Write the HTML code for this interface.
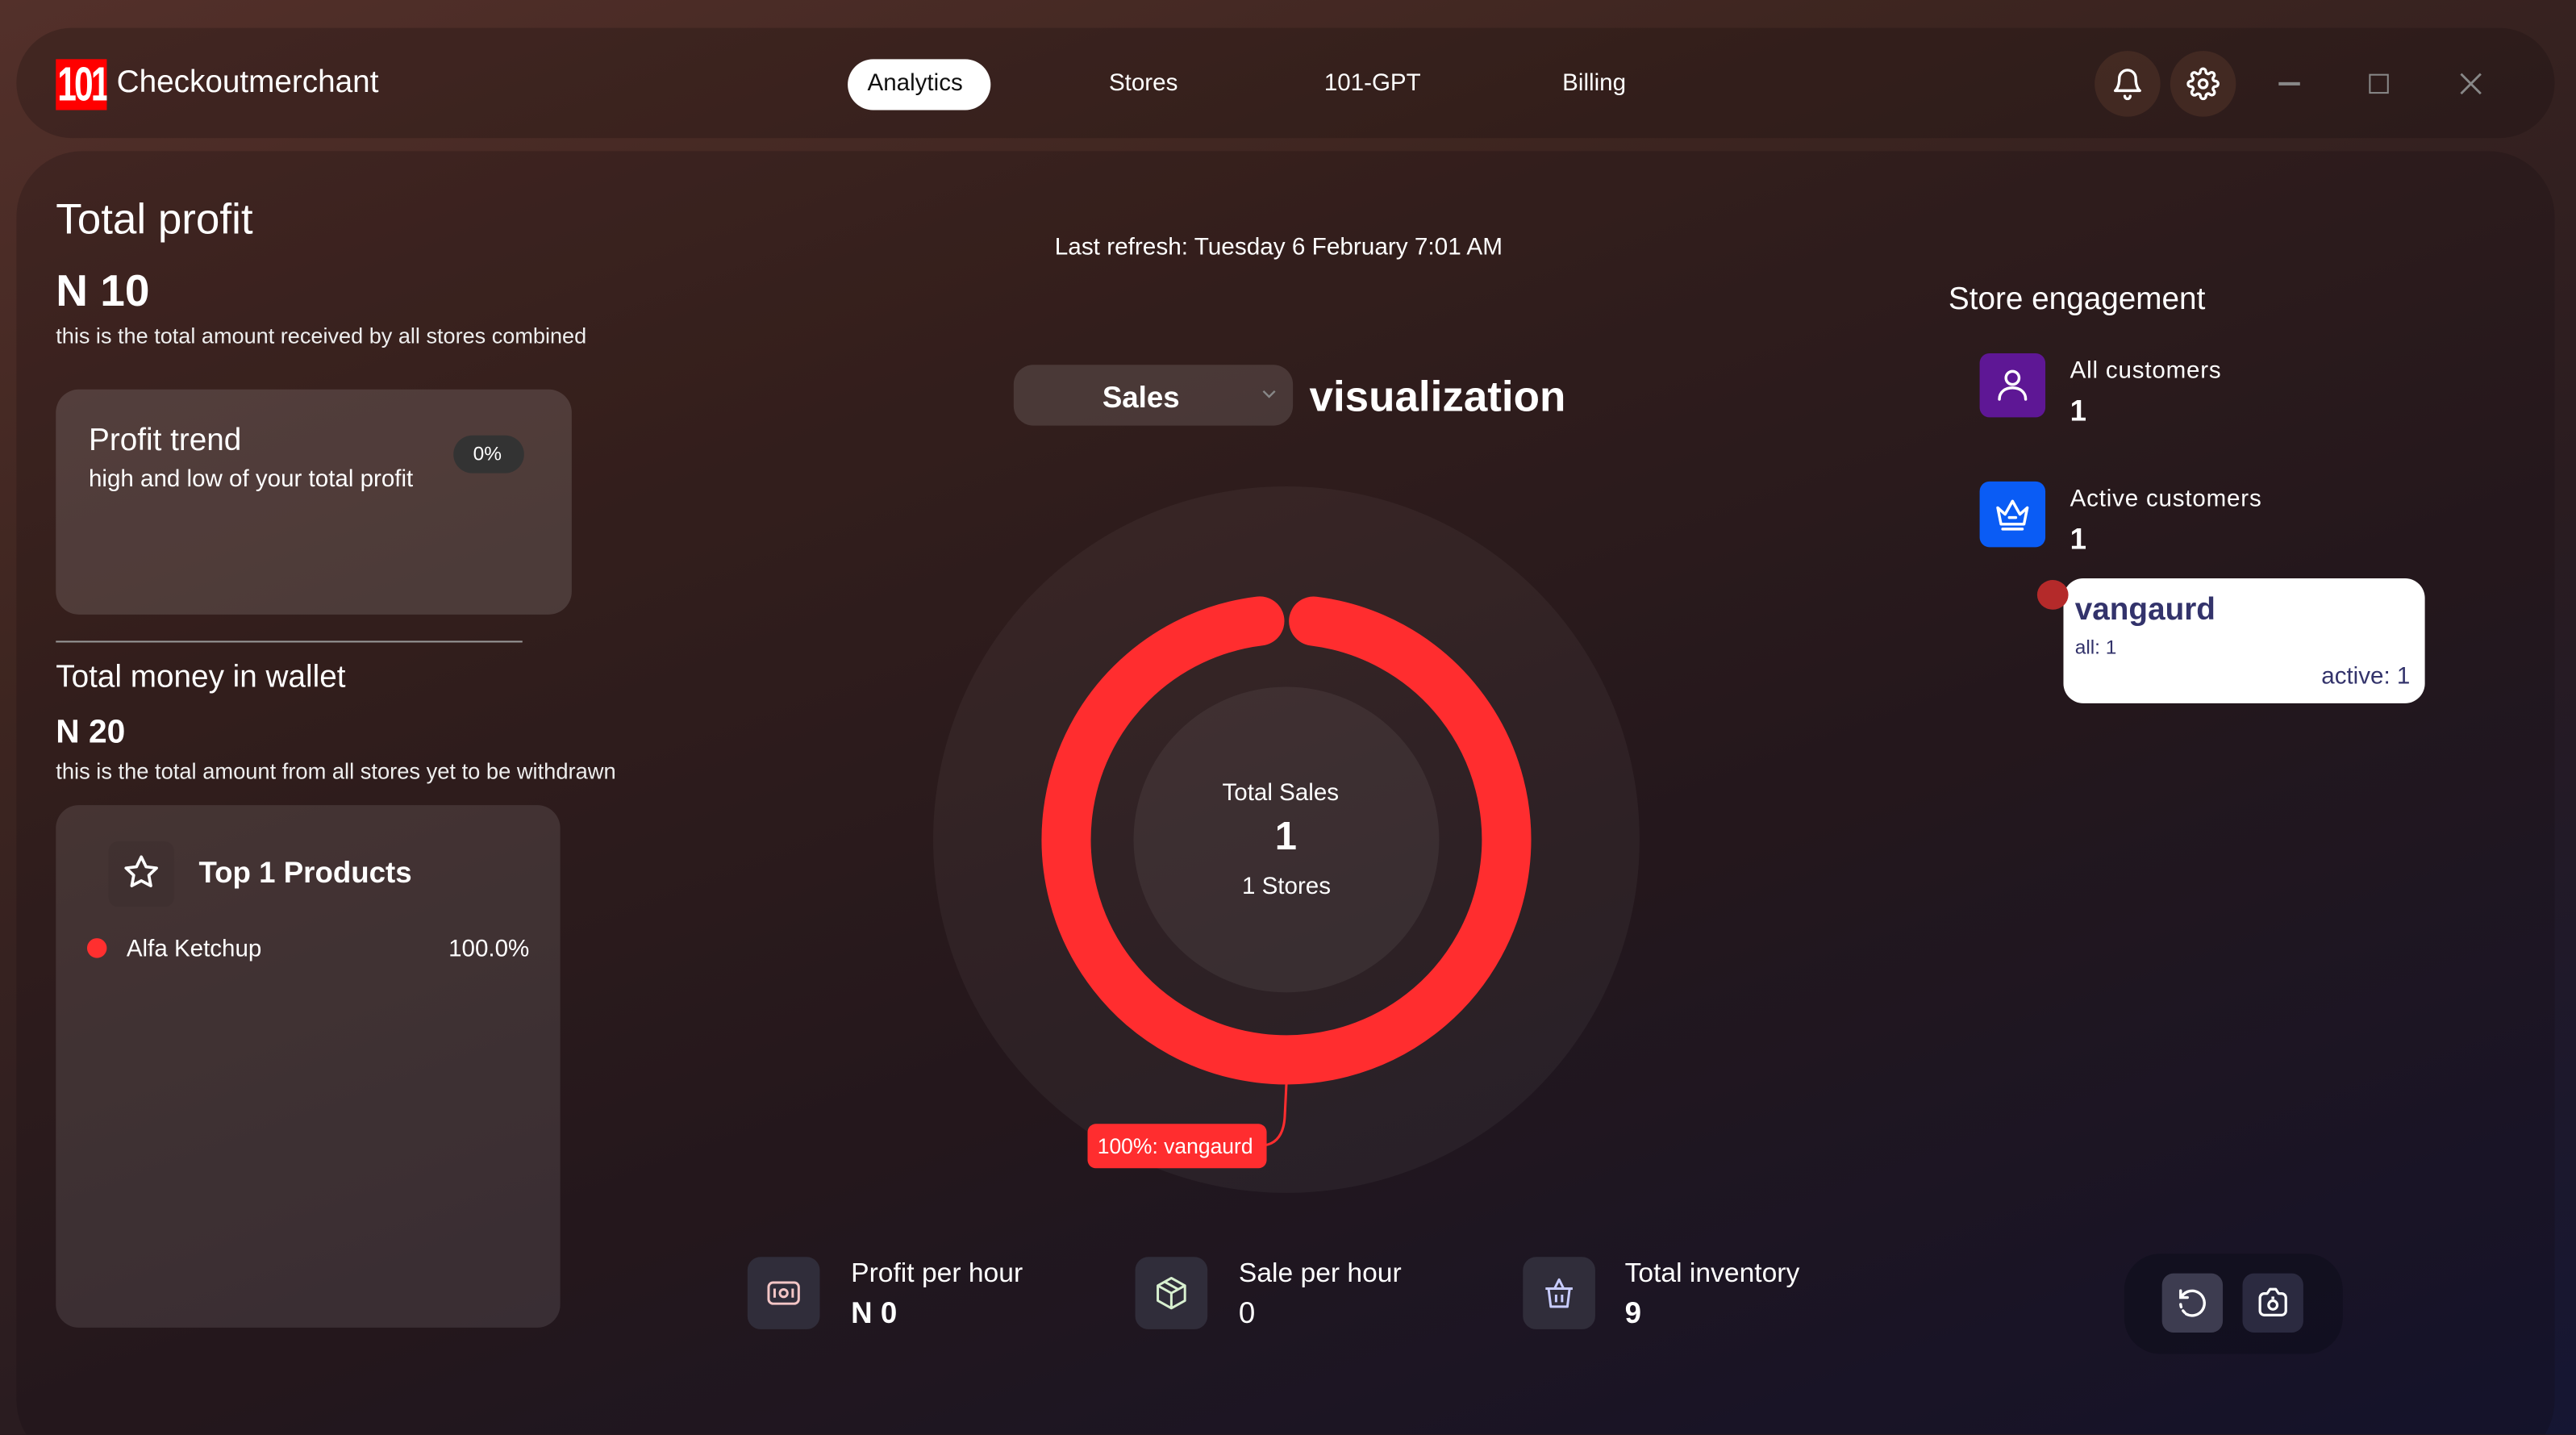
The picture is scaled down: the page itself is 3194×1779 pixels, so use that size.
<!DOCTYPE html>
<html><head><meta charset="utf-8"><style>
*{margin:0;padding:0;box-sizing:border-box}
html,body{width:3194px;height:1779px;overflow:hidden;background:#2a1a1e}
#s{position:absolute;left:0;top:0;width:1568px;height:873.4px;transform:scale(2.037);transform-origin:0 0;
background:linear-gradient(160deg,#53302a 0%,#3d2520 30%,#2a1c20 60%,#151633 100%);font-family:"Liberation Sans",sans-serif;color:#fff;overflow:hidden}
.a{position:absolute}
.hdr{left:10px;top:17px;width:1545px;height:67px;border-radius:34px;background:rgba(20,10,10,.25)}
.main{left:10px;top:92px;width:1545px;height:800px;border-radius:40px;background:rgba(20,10,12,.22)}
.t{position:absolute;white-space:nowrap}
.card{background:rgba(255,255,255,.12);border-radius:14px}
.ib{width:44px;height:44px;border-radius:8px;background:#302d3a}
</style></head><body><div id="s">
<div class="a hdr"></div>
<div class="a main"></div>
<!-- logo -->
<div class="a" style="left:34px;top:36px;width:31px;height:31px;background:#f00;overflow:hidden">
<div class="t" style="left:1px;top:1px;font:bold 29px/31px 'Liberation Sans',sans-serif;letter-spacing:-2px;color:#fff;transform:scaleX(.72);transform-origin:0 0">101</div></div>
<div class="t" style="left:71px;top:40px;font-size:19px">Checkoutmerchant</div>
<!-- nav -->
<div class="a" style="left:516px;top:36px;width:87px;height:31px;border-radius:16px;background:#fff"></div>
<div class="t" style="left:528px;top:43px;font-size:14.5px;color:#111">Analytics</div>
<div class="t" style="left:675px;top:43px;font-size:14.5px">Stores</div>
<div class="t" style="left:806px;top:43px;font-size:14.5px">101-GPT</div>
<div class="t" style="left:951px;top:43px;font-size:14.5px">Billing</div>
<div class="a" style="left:1275px;top:31px;width:40px;height:40px;border-radius:50%;background:rgba(80,50,40,.6)"></div>
<div class="a" style="left:1321px;top:31px;width:40px;height:40px;border-radius:50%;background:rgba(80,50,40,.6)"></div>
<svg class="a" style="left:1285px;top:41px" width="20" height="20" viewBox="0 0 24 24" fill="none" stroke="#fff" stroke-width="2" stroke-linecap="round" stroke-linejoin="round"><path d="M6 8a6 6 0 0 1 12 0c0 7 3 9 3 9H3s3-2 3-9"/><path d="M10 21a2 2 0 0 0 4 0"/></svg>
<svg class="a" style="left:1331px;top:41px" width="20" height="20" viewBox="0 0 24 24" fill="none" stroke="#fff" stroke-width="2" stroke-linecap="round" stroke-linejoin="round"><circle cx="12" cy="12" r="3"/><path d="M19.4 15a1.650 1.65 0 0 0 .33 1.82l.06.06a2 2 0 1 1-2.83 2.83l-.06-.06a1.65 1.65 0 0 0-1.82-.33 1.65 1.65 0 0 0-1 1.51V21a2 2 0 1 1-4 0v-.09A1.65 1.65 0 0 0 9 19.4a1.65 1.65 0 0 0-1.82.33l-.06.06a2 2 0 1 1-2.83-2.83l.06-.06a1.65 1.65 0 0 0 .33-1.820 1.65 1.65 0 0 0-1.51-1H3a2 2 0 1 1 0-4h.09A1.65 1.65 0 0 0 4.6 9a1.65 1.65 0 0 0-.33-1.82l-.06-.06a2 2 0 1 1 2.83-2.83l.06.06a1.65 1.65 0 0 0 1.82.33H9a1.65 1.65 0 0 0 1-1.51V3a2 2 0 1 1 4 0v.09a1.65 1.65 0 0 0 1 1.51 1.65 1.65 0 0 0 1.82-.33l.06-.06a2 2 0 1 1 2.83 2.83l-.06.06a1.65 1.65 0 0 0-.33 1.82V9a1.65 1.65 0 0 0 1.51 1H21a2 2 0 1 1 0 4h-.09a1.65 1.65 0 0 0-1.51 1z"/></svg>
<div class="a" style="left:1387px;top:50px;width:13px;height:1.5px;background:#888"></div>
<div class="a" style="left:1442px;top:45px;width:12px;height:12px;border:1.5px solid #888"></div>
<svg class="a" style="left:1497px;top:44px" width="14" height="14" viewBox="0 0 14 14" stroke="#888" stroke-width="1.4"><path d="M1 1L13 13M13 1L1 13"/></svg>

<!-- left -->
<div class="t" style="left:34px;top:118px;font-size:26px">Total profit</div>
<div class="t" style="left:34px;top:162px;font-size:27px;font-weight:bold">N 10</div>
<div class="t" style="left:34px;top:197px;font-size:13.3px;color:#eee">this is the total amount received by all stores combined</div>
<div class="a card" style="left:34px;top:237px;width:314px;height:137px;background:rgba(255,255,255,.13)"></div>
<div class="t" style="left:54px;top:258px;font-size:19px">Profit trend</div>
<div class="t" style="left:54px;top:284px;font-size:14.5px">high and low of your total profit</div>
<div class="a" style="left:276px;top:265px;width:43px;height:23px;border-radius:12px;background:#333"></div>
<div class="t" style="left:288px;top:269px;font-size:12px">0%</div>
<div class="a" style="left:34px;top:390px;width:284px;height:1px;background:#999"></div>
<div class="t" style="left:34px;top:402px;font-size:19px">Total money in wallet</div>
<div class="t" style="left:34px;top:435px;font-size:20px;font-weight:bold">N 20</div>
<div class="t" style="left:34px;top:462px;font-size:13.4px;color:#eee">this is the total amount from all stores yet to be withdrawn</div>
<div class="a card" style="left:34px;top:490px;width:307px;height:318px;background:rgba(255,255,255,.1)"></div>
<div class="a" style="left:66px;top:512px;width:40px;height:40px;border-radius:6px;background:rgba(0,0,0,.05)"></div>
<svg class="a" style="left:74px;top:519px" width="24" height="24" viewBox="0 0 24 24" fill="none" stroke="#fff" stroke-width="1.8" stroke-linejoin="round"><path d="M12 2.5l2.9 6 6.4.8-4.7 4.4 1.2 6.4L12 17l-5.8 3.1 1.2-6.4L2.7 9.3l6.4-.8z"/></svg>
<div class="t" style="left:121px;top:521px;font-size:18px;font-weight:bold">Top 1 Products</div>
<div class="a" style="left:53px;top:571px;width:12px;height:12px;border-radius:50%;background:#ff2f2f"></div>
<div class="t" style="left:77px;top:570px;font-size:14.5px">Alfa Ketchup</div>
<div class="t" style="left:273px;top:570px;font-size:14.5px">100.0%</div>

<!-- center -->
<div class="t" style="left:642px;top:143px;font-size:14.6px">Last refresh: Tuesday 6 February 7:01 AM</div>
<div class="a" style="left:617px;top:222px;width:170px;height:37px;border-radius:12px;background:rgba(255,255,255,.12)"></div>
<div class="t" style="left:671px;top:232px;font-size:18px;font-weight:bold">Sales</div>
<svg class="a" style="left:768px;top:237px" width="9" height="6" viewBox="0 0 9 6" fill="none" stroke="#888" stroke-width="1.2"><path d="M1 1l3.5 3.5L8 1"/></svg>
<div class="t" style="left:797px;top:226px;font-size:26px;font-weight:bold">visualization</div>
<div class="a" style="left:568px;top:296px;width:430px;height:430px;border-radius:50%;background:rgba(255,255,255,.045)"></div>
<div class="a" style="left:690px;top:418px;width:186px;height:186px;border-radius:50%;background:rgba(255,255,255,.06)"></div>
<svg class="a" style="left:0;top:0" width="1568" height="873">
<circle cx="783" cy="511" r="134" fill="none" stroke="#ff2d2f" stroke-width="30" stroke-linecap="round" stroke-dasharray="809 33" transform="rotate(-82.9 783 511)"/>
<path d="M783 660 L782 680 Q781 695 770 697" fill="none" stroke="#ff2d2f" stroke-width="1.5"/>
</svg>
<div class="t" style="left:744px;top:475px;font-size:14.5px">Total Sales</div>
<div class="t" style="left:776px;top:496px;font-size:24px;font-weight:bold">1</div>
<div class="t" style="left:756px;top:532px;font-size:14.5px">1 Stores</div>
<div class="a" style="left:662px;top:684px;width:109px;height:27px;border-radius:5px;background:#ff2d2f"></div>
<div class="t" style="left:668px;top:690px;font-size:13px">100%: vangaurd</div>

<!-- right -->
<div class="t" style="left:1186px;top:172px;font-size:19px">Store engagement</div>
<div class="a" style="left:1205px;top:215px;width:40px;height:39px;border-radius:6px;background:#5e1795"></div>
<svg class="a" style="left:1213px;top:222px" width="24" height="24" viewBox="0 0 24 24" fill="none" stroke="#fff" stroke-width="1.7" stroke-linecap="round"><circle cx="12" cy="8" r="4"/><path d="M4 21c0-4.5 3.6-7 8-7s8 2.5 8 7"/></svg>
<div class="t" style="left:1260px;top:218px;font-size:14.5px;letter-spacing:.4px">All customers</div>
<div class="t" style="left:1260px;top:240px;font-size:18px;font-weight:bold">1</div>
<div class="a" style="left:1205px;top:293px;width:40px;height:40px;border-radius:6px;background:#0a5cf5"></div>
<svg class="a" style="left:1213px;top:301px" width="24" height="24" viewBox="0 0 24 24" fill="none" stroke="#fff" stroke-width="1.7" stroke-linecap="round" stroke-linejoin="round"><path d="M3 8l4.5 4L12 4l4.5 8L21 8l-2 10H5z"/><path d="M10 14h4M6 21h12"/></svg>
<div class="t" style="left:1260px;top:296px;font-size:14.5px;letter-spacing:.4px">Active customers</div>
<div class="t" style="left:1260px;top:318px;font-size:18px;font-weight:bold">1</div>
<div class="a" style="left:1256px;top:352px;width:220px;height:76px;border-radius:12px;background:#fff"></div>
<div class="a" style="left:1240px;top:353px;width:19px;height:18px;border-radius:50%;background:#b42a2a"></div>
<div class="t" style="left:1263px;top:361px;font-size:19px;font-weight:bold;color:#33336b">vangaurd</div>
<div class="t" style="left:1263px;top:387px;font-size:12px;color:#33336b">all: 1</div>
<div class="t" style="left:1413px;top:404px;font-size:14.5px;color:#33336b">active: 1</div>

<!-- bottom -->
<div class="a ib" style="left:455px;top:765px"></div>
<svg class="a" style="left:466px;top:776px" width="22" height="22" viewBox="0 0 24 24" fill="none" stroke="#f4c6c6" stroke-width="1.6"><rect x="2" y="5" width="20" height="14" rx="3"/><circle cx="12" cy="12" r="2.5"/><path d="M6 9v6M18 9v6"/></svg>
<div class="t" style="left:518px;top:766px;font-size:16.5px">Profit per hour</div>
<div class="t" style="left:518px;top:789px;font-size:18px;font-weight:bold">N 0</div>
<div class="a ib" style="left:691px;top:765px"></div>
<svg class="a" style="left:702px;top:776px" width="22" height="22" viewBox="0 0 24 24" fill="none" stroke="#d8f0d0" stroke-width="1.6" stroke-linejoin="round"><path d="M12 2l9 5v10l-9 5-9-5V7z"/><path d="M3 7l9 5 9-5M12 12v10M7.5 4.5l9 5"/></svg>
<div class="t" style="left:754px;top:766px;font-size:16.5px">Sale per hour</div>
<div class="t" style="left:754px;top:789px;font-size:18px">0</div>
<div class="a ib" style="left:927px;top:765px"></div>
<svg class="a" style="left:938px;top:776px" width="22" height="22" viewBox="0 0 24 24" fill="none" stroke="#c8ccff" stroke-width="1.6" stroke-linejoin="round"><path d="M3 9h18M5 9l1.5 12h11L19 9M9 9l3-6 3 6M10 13v5M14 13v5"/></svg>
<div class="t" style="left:989px;top:766px;font-size:16.5px">Total inventory</div>
<div class="t" style="left:989px;top:789px;font-size:18px;font-weight:bold">9</div>
<div class="a" style="left:1293px;top:763px;width:133px;height:61px;border-radius:22px;background:rgba(10,10,25,.45)"></div>
<div class="a" style="left:1316px;top:775px;width:37px;height:36px;border-radius:7px;background:#3d3c50"></div>
<div class="a" style="left:1365px;top:775px;width:37px;height:36px;border-radius:7px;background:#2b2a40"></div>
<svg class="a" style="left:1324px;top:783px" width="20" height="20" viewBox="0 0 24 24" fill="none" stroke="#fff" stroke-width="2" stroke-linecap="round"><path d="M5 7a9 9 0 1 1 3 13"/><path d="M4 13a9 9 0 0 0 3 6" stroke-dasharray="2 3"/><path d="M4 3v5h5"/></svg>
<svg class="a" style="left:1373px;top:782px" width="21" height="21" viewBox="0 0 24 24" fill="none" stroke="#fff" stroke-width="1.8" stroke-linejoin="round"><path d="M3 9a3 3 0 0 1 3-3h2l2-3h4l2 3h2a3 3 0 0 1 3 3v9a3 3 0 0 1-3 3H6a3 3 0 0 1-3-3z"/><circle cx="12" cy="14" r="3"/><path d="M11 9h2"/></svg>
</div></body></html>
